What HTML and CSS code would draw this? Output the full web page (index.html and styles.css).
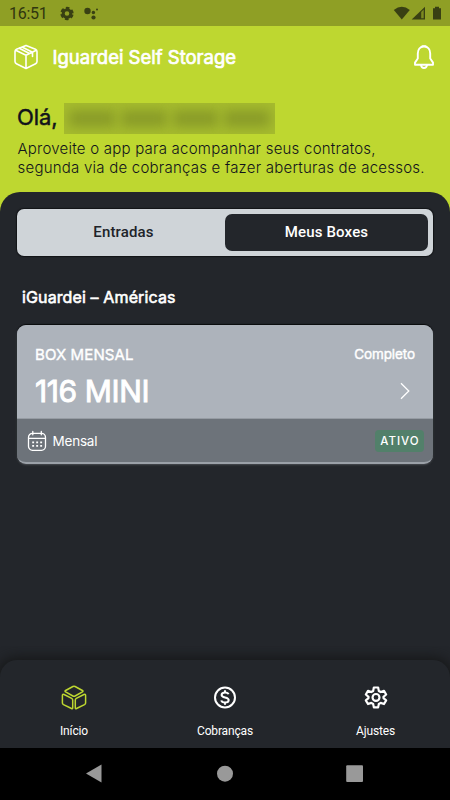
FILE: index.html
```html
<!DOCTYPE html>
<html lang="pt-BR">
<head>
<meta charset="utf-8">
<meta name="viewport" content="width=device-width, initial-scale=1">
<title>Iguardei Self Storage</title>
<link rel="stylesheet" href="styles.css">
</head>
<body>
<div class="app">
  <div class="status">
    <span class="time">16:51</span>
    <svg class="status-left" width="40" height="16" viewBox="0 0 40 16"><circle cx="7" cy="7.5" r="3.8" fill="none" stroke="#394013" stroke-width="3"/><circle cx="7" cy="7.5" r="5.400" fill="none" stroke="#394013" stroke-width="2.600" stroke-dasharray="3.455 2.200" stroke-dashoffset="-1.100"/><g fill="#394013"><circle cx="27.5" cy="5" r="3.2"/><circle cx="33.4" cy="6.5" r="1.7"/><circle cx="33.5" cy="11.500" r="2.1"/><circle cx="37" cy="3.600" r="1"/></g></svg>
    <svg class="status-right" width="49" height="16" viewBox="0 0 49 16"><path d="M.8 4Q8.800-2.600 16.800 4L8.800 13.500Z" fill="#394013"/><path d="M32 .8V13.500H18.700Z" fill="#394013"/><path d="M28.200 6V12.200H30.700V3.400Z" fill="#7c8a20"/><path d="M40 2.300H42V.7H46V2.300H48V13.500H40Z" fill="#394013"/></svg>
  </div>
  <header class="topbar">
    <svg class="box-icon" width="26" height="26" viewBox="0 0 26 26"><path d="M13 1.400 22.500 5.200Q24 5.900 24 7.500V17.500Q24 19 22.600 19.700L13 24.500 3.400 19.700Q2 19 2 17.500V7.500Q2 5.900 3.500 5.200ZM2.700 6.200 13 11.300 23.300 6.200M13 11.300V24.500M9 3 19.500 8.200V12.400M6.300 4.200 16.500 9.500"/></svg>
    <h1>Iguardei Self Storage</h1>
    <svg class="bell" width="22" height="26" viewBox="0 0 22 26"><path d="M11 2.500C6.800 2.500 4.800 5.700 4.800 9.500V14.500L2 18.600V20.700H20V18.600L17.200 14.500V9.500C17.200 5.700 15.200 2.500 11 2.500Z"/><path d="M9.400 2.100H12.600M8 21.200Q8.400 24 11 24 13.600 24 14 21.200"/></svg>
  </header>
  <section class="greeting">
    <div class="hello"><h2>Olá,</h2><div class="masked"><i></i><i></i><i></i><i></i></div></div>
    <p><span>Aproveite o app para acompanhar seus contratos,</span><br><span>segunda via de cobranças e fazer aberturas de acessos.</span></p>
  </section>
  <main class="content">
    <div class="tabs">
      <div class="tab">Entradas</div>
      <div class="tab active">Meus Boxes</div>
    </div>
    <h3>iGuardei – Américas</h3>
    <article class="card">
      <div class="card-top">
        <div class="row"><span class="kind">BOX MENSAL</span><span class="state">Completo</span></div>
        <div class="row"><span class="unit">116 MINI</span><svg class="chev" width="10" height="18" viewBox="0 0 10 18"><path d="M1 1.200 8.800 9 1 16.800"/></svg></div>
      </div>
      <div class="card-foot">
        <svg class="calendar" width="20" height="22" viewBox="0 0 20 22"><rect x="1.500" y="3.400" width="17" height="16.900" rx="4"/><path d="M1.700 8.300H18.300M5.800 1.500V4.800M14.300 1.500V4.800"/><path class="dots" d="M5.200 12.300H15.200M5.200 15.900H15.200"/></svg>
        <span class="period">Mensal</span>
        <span class="badge">ATIVO</span>
      </div>
    </article>
  </main>
  <nav class="nav">
    <div class="item">
      <svg class="green" width="26" height="26" viewBox="0 0 26 26"><path d="M11.900 1.500Q13 .9 14.100 1.500L21.400 5.500Q22.500 6.200 21.400 6.900L14.100 11Q13 11.600 11.900 11L4.600 6.900Q3.500 6.200 4.600 5.500ZM3.100 9.500 10.700 13.400Q11.700 13.900 11.700 15.100V22.700Q11.700 24 10.500 23.500L2.500 19.600Q1.400 19 1.400 17.900V10.500Q1.400 8.800 3.100 9.500ZM22.900 9.500 15.300 13.400Q14.300 13.900 14.300 15.100V22.700Q14.300 24 15.500 23.500L23.500 19.600Q24.600 19 24.600 17.900V10.500Q24.600 8.800 22.900 9.500Z"/></svg>
      <span>Início</span>
    </div>
    <div class="item">
      <svg width="26" height="26" viewBox="0 0 26 26"><circle cx="13" cy="12.500" r="10"/><path d="M16.500 9.300C16.100 7.800 14.800 7.400 13 7.400 11 7.400 9.600 8.300 9.600 9.900 9.600 13.300 16.700 11.500 16.700 15.100 16.700 16.700 15.100 17.600 13 17.600 11 17.600 9.600 16.900 9.300 15.400M13 5.300V7.500M13 17.500V19.700"/></svg>
      <span>Cobranças</span>
    </div>
    <div class="item">
      <svg width="26" height="26" viewBox="0 0 24 24"><path d="M10 2.300H14L14.600 5.500 16.300 6.500 19.400 5.400 21.400 8.800 18.900 10.900V12.100L21.400 14.200 19.400 17.600 16.300 16.500 14.600 17.500 14 20.700H10L9.400 17.500 7.700 16.500 4.600 17.600 2.600 14.200 5.100 12.100V10.900L2.600 8.800 4.600 5.400 7.700 6.500 9.400 5.500Z"/><circle cx="12" cy="11.500" r="3.200"/></svg>
      <span>Ajustes</span>
    </div>
  </nav>
  <div class="system">
    <svg width="18" height="20" viewBox="0 0 18 20"><path d="M1 9.500 16.500.5V18.500Z"/></svg>
    <svg width="18" height="20" viewBox="0 0 18 20"><circle cx="9" cy="9.700" r="8"/></svg>
    <svg width="18" height="20" viewBox="0 0 18 20"><rect x=".2" y="1.200" width="16.800" height="16.800" rx="1"/></svg>
  </div>
</div>
</body>
</html>
```

FILE: styles.css
```css
* { box-sizing: border-box; }
body { margin: 0; background: #23262b; font-family: Inter, sans-serif; }
h1, h2, h3, p { margin: 0; }
svg { display: block; flex: none; }
span { white-space: nowrap; }
.app { width: 450px; height: 800px; display: flex; flex-direction: column; background: #bed730; overflow: hidden; }
.status { height: 26px; background: #8f9f25; display: flex; align-items: center; padding: 1px 8px 0 9px; flex: none; }
.time { width: 51px; font: 400 16px/20px Roboto, sans-serif; letter-spacing: -.3px; color: #30360f; }
.status-right { margin-left: auto; }
.topbar { height: 62px; display: flex; align-items: center; padding: 0 15px 0 13px; flex: none; }
.box-icon, .bell { fill: none; stroke: #fff; stroke-width: 1.6; stroke-linejoin: round; stroke-linecap: round; }
.bell { margin-left: auto; stroke-width: 1.9; }
h1 { margin-left: 13.500px; font: 400 18.500px/24px Inter, sans-serif; letter-spacing: 0; color: #fff; white-space: nowrap; -webkit-text-stroke: .7px #fff; }
.greeting { height: 104px; padding: 15px 17px 0; color: #11131b; flex: none; }
.hello { display: flex; height: 31px; align-items: center; }
h2 { width: 47px; padding-bottom: 3px; font: 400 22px/28px Inter, sans-serif; letter-spacing: -.1px; -webkit-text-stroke: .5px #11131b; }
.masked { width: 211px; height: 31px; background: #a6bc2e; overflow: hidden; display: flex; align-items: center; gap: 6px; padding: 0 5px; }
.masked i { height: 17px; flex: 1; background: #899b28; filter: blur(6px); }
p { margin-top: 6px; padding-left: .5px; font-size: 15px; line-height: 18.500px; font-weight: 300; letter-spacing: .230px; }
.content { height: 488px; background: #23262b; border-radius: 20px 20px 0 0; padding: 17px 17px 0; flex: none; }
.tabs { height: 47px; display: grid; grid-template-columns: 1fr 1fr; background: #cfd4d8; border-radius: 7px; padding: 5px; box-shadow: 0 0 1px 1px #121417; }
.tab { display: flex; align-items: center; justify-content: center; height: 37px; font: 500 15px/18px Roboto, sans-serif; letter-spacing: .15px; color: #202329; padding: 0 0 2px; }
.active { background: #23262b; color: #fff; border-radius: 7px; }
h3 { margin: 30px 0 0 5px; font: 400 16px/22px Inter, sans-serif; color: #fff; letter-spacing: .120px; -webkit-text-stroke: .6px #fff; }
.card { height: 139px; margin-top: 17px; border-radius: 9px; overflow: hidden; background: #6d737a; border-bottom: 2px solid #9ba1a8; box-shadow: 0 -1px 1px #090a0c, 0 1px 2px #4a4d52; color: #fff; }
.card-top { height: 94px; background: #adb3bb; border-bottom: 1px solid #969ca3; padding: 18px 18px 0; }
.row { display: flex; justify-content: space-between; }
.kind { font: 400 15px/23px Inter, sans-serif; letter-spacing: .1px; -webkit-text-stroke: .4px #fff; }
.state { font: 400 13.500px/22px Inter, sans-serif; letter-spacing: -.1px; -webkit-text-stroke: .4px #fff; }
.unit { margin-top: 7px; font: 400 30px/36px Inter, sans-serif; letter-spacing: -.4px; -webkit-text-stroke: .9px #fff; }
.chev { margin: 16px 5px 0 0; fill: none; stroke: #fff; stroke-width: 1.3; }
.card-foot { height: 43px; display: flex; align-items: center; padding: 0 9px 0 10px; }
.calendar { fill: none; stroke: #fff; stroke-width: 1.3; stroke-linecap: round; }
.dots { stroke-width: 1.8; stroke-linecap: butt; stroke-dasharray: 1.9 2.1; }
.period { margin-left: 5.500px; font-size: 13.500px; letter-spacing: -.2px; }
.badge { margin-left: auto; width: 49px; height: 22px; border-radius: 4px; background: #52806a; font: 500 11.500px/22px Inter, sans-serif; letter-spacing: 1px; text-align: center; padding-left: 1px; }
.nav { height: 88px; margin-top: -20px; flex: none; position: relative; background: #23262b; border-radius: 17px 17px 0 0; clip-path: inset(-14px 0 0 0); box-shadow: 0 0 12px 3px #171819; display: grid; grid-template-columns: repeat(3, 1fr); padding: 25px 0 0; }
.item { display: flex; flex-direction: column; align-items: center; color: #fff; }
.item svg { fill: none; stroke: #fff; stroke-width: 2; stroke-linejoin: round; }
.item .green { stroke: #bed730; stroke-width: 1.5; }
.item span { margin-top: 12px; font: 400 12px/16px Roboto, sans-serif; letter-spacing: -.150px; }
.item:first-child { padding-right: 2px; }
.item:last-child { padding-left: 1px; }
.system { height: 52px; flex: none; background: #000; display: flex; justify-content: space-between; align-items: center; padding: 0 86px 0 85px; }
.system svg { fill: #999; }
```
